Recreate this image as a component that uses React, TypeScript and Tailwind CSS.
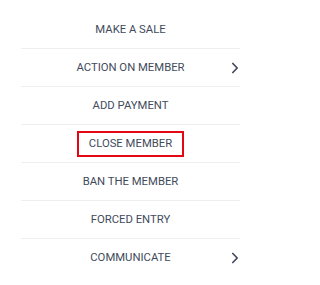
import React from "react";

const items: { label: string; chevron?: boolean; selected?: boolean }[] = [
  { label: "MAKE A SALE" },
  { label: "ACTION ON MEMBER", chevron: true },
  { label: "ADD PAYMENT" },
  { label: "CLOSE MEMBER", selected: true },
  { label: "BAN THE MEMBER" },
  { label: "FORCED ENTRY" },
  { label: "COMMUNICATE", chevron: true },
];

function Chevron() {
  return (
    <svg width="8" height="12" viewBox="0 0 8 12" fill="none" className="absolute right-[1px] top-1/2 -translate-y-1/2">
      <path d="M1.8 1.5 L6.2 6 L1.8 10.5" stroke="#3f4b5b" strokeWidth="1.7" strokeLinecap="round" strokeLinejoin="round" />
    </svg>
  );
}

export default function App() {
  return (
    <div className="w-[282px] h-[285px] bg-white pl-[21px] pr-[42px] pt-[11px]" style={{ fontFamily: "Roboto, 'Liberation Sans', sans-serif" }}>
      <ul className="flex flex-col">
        {items.map((it, i) => (
          <li
            key={it.label}
            className={`relative h-[38px] flex items-center justify-center text-[11.3px] leading-none text-[#3f4b5b] ${i < items.length - 1 ? "border-b border-[#eeeeee]" : ""}`}
          >
            {it.selected ? (
              <span className="border-2 border-[#e30613] px-[10px] h-[26px] flex items-center">{it.label}</span>
            ) : (
              <span>{it.label}</span>
            )}
            {it.chevron && <Chevron />}
          </li>
        ))}
      </ul>
    </div>
  );
}
